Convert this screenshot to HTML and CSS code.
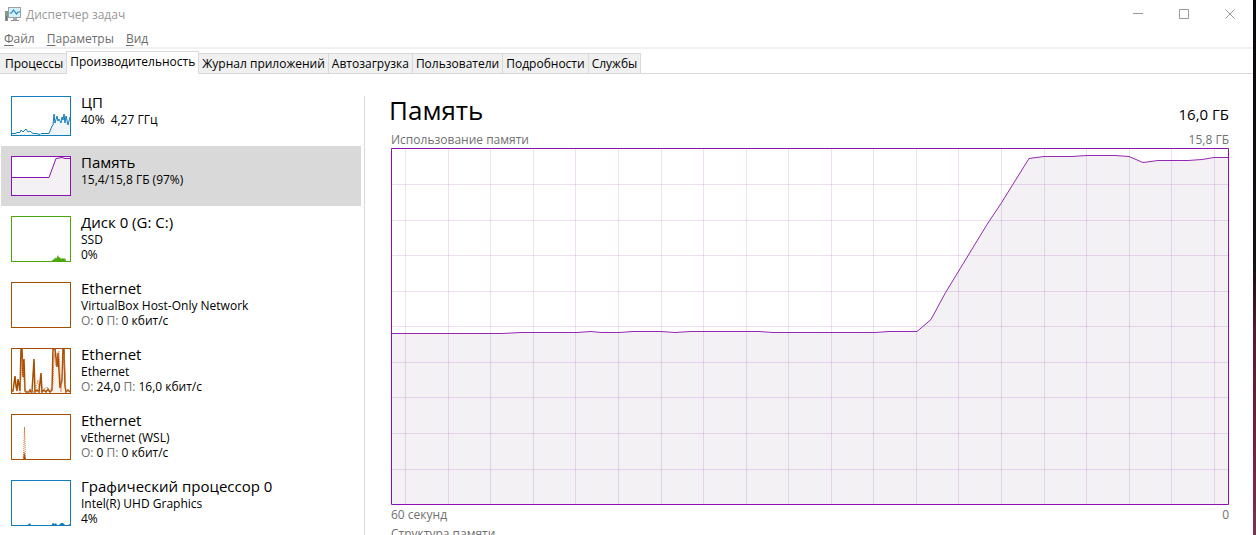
FILE: index.html
```html
<!DOCTYPE html>
<html lang="ru">
<head>
<meta charset="utf-8">
<title>Диспетчер задач</title>
<link rel="stylesheet" href="styles.css">
</head>
<body>
<div class="window">
  <header class="titlebar">
    <svg class="app-icon" width="17" height="15" viewBox="0 0 17 15" aria-hidden="true">
      <rect x="0" y="4" width="3" height="10" fill="#8d9193"/>
      <rect x="1" y="5" width="1" height="3" fill="#5fc04a"/>
      <rect x="1" y="9" width="1" height="4" fill="#6f7375"/>
      <rect x="3" y="0" width="13" height="11" fill="#9ba0a3"/>
      <rect x="4" y="1" width="11" height="9" fill="#d5f0fc"/>
      <path d="M4.500 6h2l2-3 3 4 1.500-2h2" fill="none" stroke="#2384bd" stroke-width="1.2"/>
      <rect x="8" y="11" width="4" height="2" fill="#a9adaf"/>
      <rect x="6" y="13" width="8" height="1" fill="#8d9193"/>
    </svg>
    <h1 class="title">Диспетчер задач</h1>
    <div class="controls">
      <button class="control" aria-label="Свернуть"><svg width="11" height="11"><path d="M0 4.500h10"/></svg></button>
      <button class="control" aria-label="Развернуть"><svg width="11" height="11"><path d="M.5.5h9v9h-9z"/></svg></button>
      <button class="control" aria-label="Закрыть"><svg width="11" height="11"><path d="M.5.5l9 9M9.500.5l-9 9"/></svg></button>
    </div>
  </header>
  <nav class="menu">
    <button><u>Ф</u>айл</button>
    <button><u>П</u>араметры</button>
    <button><u>В</u>ид</button>
  </nav>
  <div class="tabs" role="tablist">
    <button class="tab" role="tab">Процессы</button>
    <button class="tab active" role="tab" aria-selected="true">Производительность</button>
    <button class="tab" role="tab">Журнал приложений</button>
    <button class="tab" role="tab">Автозагрузка</button>
    <button class="tab" role="tab">Пользователи</button>
    <button class="tab" role="tab">Подробности</button>
    <button class="tab" role="tab">Службы</button>
  </div>
  <main class="content">
    <aside class="sidebar">
      <button class="item">
        <svg class="thumb short blue" viewBox="0 0 58 38"><path class="area" d="M0 37H37L39 30 41 29 42 18 44 26 46 22 48 27 51 19 52 25 54 17 56 24 57 28 58 21V38H0z"/><path class="line" d="M0 36.500H3L5 35.500H8L9 33 11 35 14 32 16 35 18 34 21 36.500H24L28 37.500 29 36.500H37L40 29 41 28 42 17 43 26 45 19 46 24 47 22 49 26 50 20 51 23 52 17 53 26 54 19 55 23 56 28 57 24 58 20"/></svg>
        <span class="info"><span class="name">ЦП</span><span class="row">40%&ensp;4,27 ГГц</span></span>
      </button>
      <button class="item selected">
        <svg class="thumb short purple" viewBox="0 0 58 38"><path class="area" d="M0 20H37L44 1H58V38H0z"/><path class="line" d="M0 20.500H37L44 1.500 50 .500 53 1.500H58"/></svg>
        <span class="info"><span class="name">Память</span><span class="row">15,4/15,8 ГБ (97%)</span></span>
      </button>
      <button class="item">
        <svg class="thumb green" viewBox="0 0 58 44"><path class="solid" d="M40 44l1-2 1 1 1-3 1 2 2-4 1 3 1-1 1 2 2-1 1 1 1-1 1 3z"/></svg>
        <span class="info"><span class="name">Диск 0 (G: C:)</span><span class="row">SSD</span><span class="row">0%</span></span>
      </button>
      <button class="item">
        <svg class="thumb brown" viewBox="0 0 58 44"></svg>
        <span class="info"><span class="name">Ethernet</span><span class="row">VirtualBox Host-Only Network</span><span class="row"><i>О:</i> 0 <i>П:</i> 0 кбит/с</span></span>
      </button>
      <button class="item">
        <svg class="thumb brown" viewBox="0 0 58 44"><path class="area" d="M40 44L42 0H44L46 16 48 12 49 40 51 8 53 5V44z"/><path class="line heavy" d="M0 42H1L3 27 4 37 5 42 6 30 8 42 9 0H10L11 28 12 10 13 42 14 43H17L18 41 19 43H20L22 10 23 43 25 41 27 43 29 24 30 43 32 41 34 43 36 40 38 43 40 41 41 0H43L45 18 46 4 48 39 50 31 51 0H52L53 37 54 43 56 41 58 43"/><path class="line dotted" d="M4 40L8 44 10 8 13 42 23 43 26 31 27 43 35 38 37 43 41 36 42 4 44 17 47 2 49 43 52 5 54 43 58 40"/></svg>
        <span class="info"><span class="name">Ethernet</span><span class="row">Ethernet</span><span class="row"><i>О:</i> 24,0 <i>П:</i> 16,0 кбит/с</span></span>
      </button>
      <button class="item">
        <svg class="thumb brown" viewBox="0 0 58 44"><path class="solid" d="M11 44l1-8 2 8z"/><path class="line dotted" d="M11.500 44L12.500 12 13.500 44"/></svg>
        <span class="info"><span class="name">Ethernet</span><span class="row">vEthernet (WSL)</span><span class="row"><i>О:</i> 0 <i>П:</i> 0 кбит/с</span></span>
      </button>
      <button class="item">
        <svg class="thumb blue" viewBox="0 0 58 44"><path class="solid" d="M15 44l2-1 1-1 1 2zM40 44v-1l1-1 2 1 1-1 1 2zM47 44l2-2h2l2 2zM56 44l2-1v1z"/></svg>
        <span class="info"><span class="name">Графический процессор 0</span><span class="row">Intel(R) UHD Graphics</span><span class="row">4%</span></span>
      </button>
    </aside>
    <section class="details">
      <div class="heading"><h2>Память</h2><span class="total">16,0 ГБ</span></div>
      <div class="caption top"><span>Использование памяти</span><span>15,8 ГБ</span></div>
      <svg class="chart" viewBox="0 0 838 357" role="img" aria-label="Использование памяти">
        <path class="fill" d="M0 185.500H111L130 184.500H186L200 183.500 210 184.500H228L242 183.500H270L284 184.500 300 183.500H368L382 184.500H484L498 183.500H526L540 171.500 554 145.500 596 76.500 610 55.500 638 10.500 653 8.500H681L696 7.500H724L738 8.500 752 14.500 767 12.500H797L811 11.500 823 9.500H838V357H0z"/>
        <path class="grid" d="M14.500 0v357M57.500 0v357M99.500 0v357M142.500 0v357M184.500 0v357M227.500 0v357M270.500 0v357M312.500 0v357M355.500 0v357M397.500 0v357M440.500 0v357M482.500 0v357M525.500 0v357M567.500 0v357M610.500 0v357M653.500 0v357M695.500 0v357M738.500 0v357M780.500 0v357M823.500 0v357M0 36.500h838M0 72.500h838M0 107.500h838M0 143.500h838M0 178.500h838M0 214.500h838M0 249.500h838M0 285.500h838M0 321.500h838"/>
        <path class="usage" d="M0 185.500H111L130 184.500H186L200 183.500 210 184.500H228L242 183.500H270L284 184.500 300 183.500H368L382 184.500H484L498 183.500H526L540 171.500 554 145.500 596 76.500 610 55.500 638 10.500 653 8.500H681L696 7.500H724L738 8.500 752 14.500 767 12.500H797L811 11.500 823 9.500H838"/>
        <path class="frame" d="M.5.5h837v356h-837z"/>
      </svg>
      <div class="caption"><span>60 секунд</span><span>0</span></div>
      <div class="caption"><span>Структура памяти</span></div>
    </section>
  </main>
</div>
</body>
</html>
```
FILE: styles.css
```css
* { box-sizing: border-box; }
body {
  margin: 0;
  height: 100vh;
  overflow: hidden;
  padding-right: 3px;
  background: linear-gradient(#08070c, #141018 50%, #5a1830 62%, #79203f 85%, #7c3050);
  font: 12px/15px "Open Sans", "Noto Sans", sans-serif;
  color: #000;
}
button {
  border: 0;
  margin: 0;
  padding: 0;
  background: none;
  font: inherit;
  color: inherit;
  text-align: left;
}
.window { height: 100%; display: flex; flex-direction: column; background: #fff; overflow: hidden; }

.titlebar { flex: none; display: flex; align-items: center; height: 28px; padding-left: 5px; color: #999; }
.title { margin: 0 0 0 4px; font: inherit; flex: 1; }
.controls { display: flex; }
.control { width: 46px; height: 28px; display: grid; place-items: center; }
.control path { fill: none; stroke: #999; }

.menu {
  flex: none;
  display: flex;
  gap: 12px;
  height: 21px;
  padding: 3px 4px 0;
  align-items: flex-start;
  border-bottom: 2px solid #f0f0f0;
  color: #6d6d6d;
}
.menu u { text-underline-offset: 2px; }

.tabs { flex: none; display: flex; align-items: flex-end; height: 25px; padding-top: 2px; border-bottom: 1px solid #d9d9d9; }
.tab {
  height: 20px;
  padding: 0 3px;
  background: #f0f0f0;
  border: 1px solid #d9d9d9;
  border-width: 1px 1px 0 0;
  white-space: nowrap;
}
.tab:first-child { padding-left: 5px; }
.tab.active { height: 23px; margin: 0 0 -1px -1px; padding: 0 3px 3px; background: #fff; border-width: 1px 1px 0 1px; }

.content { flex: 1; min-height: 0; display: flex; padding-top: 12px; }
.sidebar { flex: none; width: 361px; padding-left: 1px; }
.item { display: flex; align-items: flex-start; gap: 10px; width: 100%; padding: 10px; }
.item.selected { background: #d9d9d9; }
.thumb { flex: none; width: 60px; height: 46px; border: 1px solid currentColor; background: #fff; }
.thumb.short { height: 40px; }
.blue { color: #117dbb; }
.purple { color: #8b12ae; }
.green { color: #4da60c; }
.brown { color: #a74f01; }
.area { fill: currentColor; opacity: .07; }
.purple .area { fill: #f3f1f4; opacity: 1; }
.line { fill: none; stroke: currentColor; }
.heavy { stroke-width: 1.5; }
.dotted { stroke: #d9713a; stroke-dasharray: 1 1; }
.solid { fill: currentColor; }
.info { display: flex; flex-direction: column; height: 40px; white-space: nowrap; }
.name { font-size: 15px; line-height: 16px; margin: -2px 0 2px; }
.row i { font-style: normal; color: #707070; }

.details { flex: 1; min-width: 0; margin: 10px 0 0 3px; padding: 0 24px 0 26px; border-left: 1px solid #d9d9d9; }
.heading { display: flex; justify-content: space-between; align-items: baseline; height: 35px; }
.heading h2 { margin: 0 0 0 -2px; font-size: 26px; line-height: 28px; font-weight: 400; }
.total { font-size: 15px; }
.caption { display: flex; justify-content: space-between; color: #707070; height: 19px; line-height: 19px; }
.caption.top { height: 17px; line-height: 17px; }
.chart { display: block; width: 100%; height: auto; }
.fill { fill: #f3f1f4; }
.grid { fill: none; stroke: #8b12ae; stroke-opacity: .14; }
.usage { fill: none; stroke: #9528b4; }
.frame { fill: none; stroke: #8b12ae; }
```
